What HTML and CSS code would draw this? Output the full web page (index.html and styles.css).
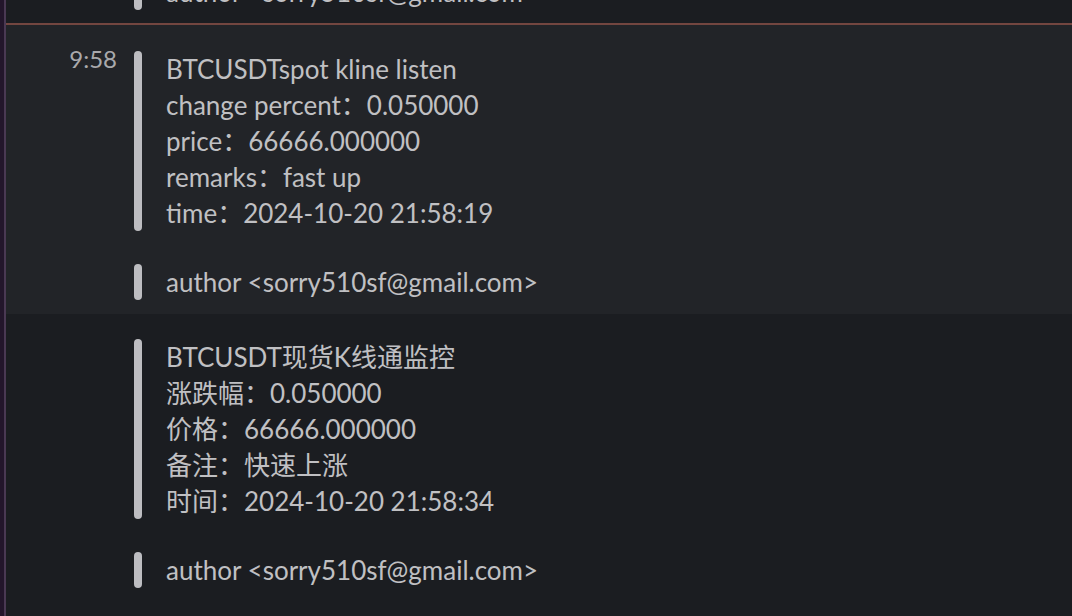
FILE: index.html
```html
<!DOCTYPE html>
<html lang="en">
<head>
    <meta charset="UTF-8">
    <title>alerts</title>
    <link rel="stylesheet" href="styles.css">
</head>
<body>
    <div class="app">
        <div class="edge"></div>
        <div class="messages">
            <div class="msg msg-tail">
                <div class="gutter"></div>
                <div class="msg-body">
                    <div class="attachment">
                        <div class="bar"></div>
                        <div class="att-text">author &lt;sorry510sf@gmail.com&gt;</div>
                    </div>
                </div>
            </div>

            <div class="divider"></div>

            <div class="msg msg-hover">
                <div class="gutter"><span class="time">9:58</span></div>
                <div class="msg-body">
                    <div class="attachment">
                        <div class="bar"></div>
                        <div class="att-text">
                            BTCUSDTspot kline listen<br>
                            change percent：0.050000<br>
                            price：66666.000000<br>
                            remarks：fast up<br>
                            time：2024-10-20 21:58:19
                        </div>
                    </div>
                    <div class="attachment">
                        <div class="bar"></div>
                        <div class="att-text">author &lt;sorry510sf@gmail.com&gt;</div>
                    </div>
                </div>
            </div>

            <div class="msg msg-next">
                <div class="gutter"></div>
                <div class="msg-body">
                    <div class="attachment">
                        <div class="bar"></div>
                        <div class="att-text">
                            BTCUSDT现货K线通监控<br>
                            涨跌幅：0.050000<br>
                            价格：66666.000000<br>
                            备注：快速上涨<br>
                            时间：2024-10-20 21:58:34
                        </div>
                    </div>
                    <div class="attachment">
                        <div class="bar"></div>
                        <div class="att-text">author &lt;sorry510sf@gmail.com&gt;</div>
                    </div>
                </div>
            </div>
        </div>
    </div>
</body>
</html>
```

FILE: styles.css
```css
body {
    margin: 0;
    background-color: #1b1d21;
    font-family: Lato, "Noto Sans CJK SC", sans-serif;
    color: #c0c0c3;
    overflow: hidden;
}
.app {
    display: flex;
    height: 616px;
}
.edge {
    width: 4px;
    background-color: #23162b;
    border-right: 2px solid #4a3953;
    flex-shrink: 0;
}
.messages {
    flex: 1;
    margin-top: -26px;
}
.msg {
    display: flex;
}
.msg-tail {
    padding: 0 0 13px;
}
.divider {
    height: 2px;
    background-color: #734640;
}
.msg-hover {
    background-color: #222428;
    padding: 26px 0 14px;
}
.msg-next {
    padding: 25px 0 15px;
}
.gutter {
    width: 111px;
    padding-right: 17px;
    text-align: right;
    flex-shrink: 0;
}
.time {
    display: block;
    margin-top: -2px;
    font-size: 24px;
    line-height: 20px;
    color: #a9a9ac;
}
.msg-body {
    display: flex;
    flex-direction: column;
    gap: 33px;
}
.attachment {
    display: flex;
}
.bar {
    width: 8px;
    border-radius: 4px;
    background-color: #bdbdc1;
    flex-shrink: 0;
}
.att-text {
    padding-left: 24px;
    font-size: 26px;
    line-height: 36px;
}
```
